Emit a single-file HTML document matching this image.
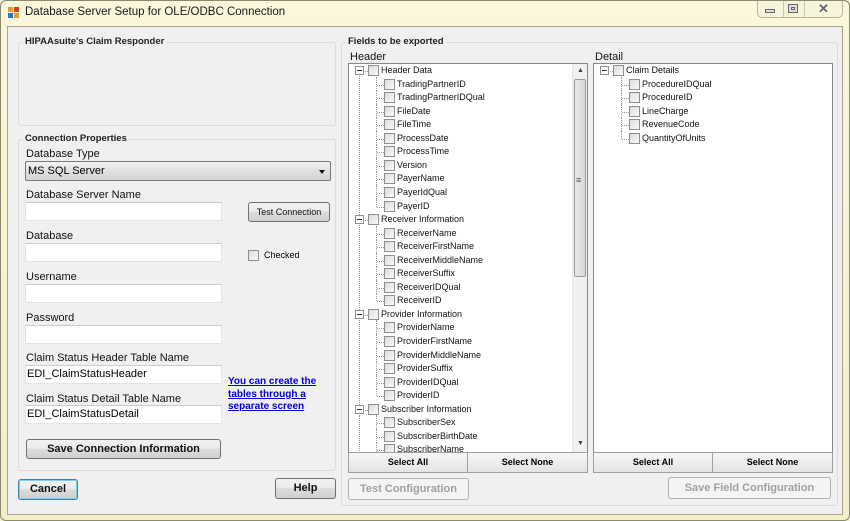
<!DOCTYPE html>
<html><head><meta charset="utf-8"><style>
*{box-sizing:border-box;margin:0;padding:0}
body{width:850px;height:521px;overflow:hidden;background:#f3efd0;font-family:"Liberation Sans",sans-serif;position:relative}
.a{position:absolute}
.frame{left:0;top:0;width:850px;height:521px;background:linear-gradient(#faf7dc,#f2eec8);border:1px solid #8b8a6e;border-radius:6px}
.client{left:7px;top:26px;width:836px;height:489px;background:#f0f0f0;border:1px solid #a9a58a}
.title{left:25px;top:6px;font-size:11.5px;color:#1a1a1a}
.grp{border:1px solid #d8dde3;border-radius:3px}
.gl{font-size:9.5px;font-weight:bold;color:#222;background:#f0f0f0;padding:0 2px}
.lbl{font-size:11px;color:#111}
.tb{background:#fff;border:1px solid #e2e3ea;border-top-color:#c9ccd4;font-size:11px;padding:2px 1px;height:19px}
.btn{border:1px solid #707070;border-radius:3px;background:linear-gradient(#f2f2f2 0%,#ebebeb 45%,#dddddd 50%,#cfcfcf 100%);font-size:11px;text-align:center;color:#111}
.dis{border-color:#adb2b5;background:#f4f4f4;color:#a0a0a0}
.list{background:#fff;border:1px solid #828790;overflow:hidden}
.row{position:absolute;height:13px;font-size:9px;line-height:13px;color:#111;white-space:nowrap}
.cb{position:absolute;width:11px;height:11px;border:1px solid #8f8f8f;background:linear-gradient(135deg,#dcdcdc,#fafafa);top:1px}
.ex{position:absolute;width:9px;height:9px;border:1px solid #919191;background:#fff;top:2px}
.ex:after{content:"";position:absolute;left:1px;top:3px;width:5px;height:1px;background:#333}
.vd{position:absolute;border-left:1px dotted #999;width:0}
.hd{position:absolute;border-top:1px dotted #999;height:0}
.sb{font-size:9px;font-weight:bold;text-align:center;line-height:19px;border:1px solid #a0a0a0;background:linear-gradient(#f6f6f6,#e4e4e4)}
</style></head><body>
<div class="a frame"></div>
<div class="a" style="left:8px;top:7px;width:12px;height:11px">
<div class="a" style="left:0;top:0;width:5px;height:5px;background:#e0a030"></div>
<div class="a" style="left:6px;top:0;width:5px;height:5px;background:#d04020"></div>
<div class="a" style="left:0;top:6px;width:5px;height:5px;background:#3070c0"></div>
<div class="a" style="left:6px;top:6px;width:5px;height:5px;background:#e0a030"></div></div>
<div class="a title">Database Server Setup for OLE/ODBC Connection</div>
<div class="a" style="left:757px;top:1px;width:86px;height:17px;border:1px solid #b8b59a;border-top:none;border-radius:0 0 5px 5px;background:#f7f4dc"></div>
<div class="a" style="left:783px;top:1px;width:1px;height:16px;background:#c8c5aa"></div>
<div class="a" style="left:804px;top:1px;width:1px;height:16px;background:#c8c5aa"></div>
<div class="a" style="left:765px;top:9px;width:10px;height:4px;border:1px solid #666;background:#ddd"></div>
<div class="a" style="left:788px;top:4px;width:10px;height:9px;border:1px solid #666;background:#ddd"><div class="a" style="left:2px;top:2px;width:4px;height:3px;border:1px solid #666"></div></div>
<div class="a" style="left:818px;top:1px;font-size:13px;color:#666;font-weight:bold">✕</div>
<div class="a client"></div>

<!-- left groups -->
<div class="a grp" style="left:18px;top:42px;width:318px;height:84px"></div>
<div class="a gl" style="left:23px;top:36px">HIPAAsuite's Claim Responder</div>
<div class="a grp" style="left:18px;top:139px;width:318px;height:332px"></div>
<div class="a gl" style="left:23px;top:133px">Connection Properties</div>

<div class="a lbl" style="left:26px;top:148px">Database Type</div>
<div class="a" style="left:25px;top:161px;width:306px;height:20px;border:1px solid #7a7a7a;border-radius:2px;background:linear-gradient(#f3f3f3,#e0e0e0 50%,#d5d5d5);font-size:11px;padding:3px 2px">MS SQL Server</div>
<div class="a" style="left:319px;top:170px;width:0;height:0;border-left:3.5px solid transparent;border-right:3.5px solid transparent;border-top:4px solid #111"></div>

<div class="a lbl" style="left:26px;top:189px">Database Server Name</div>
<div class="a tb" style="left:25px;top:202px;width:197px"></div>
<div class="a btn" style="left:248px;top:202px;width:82px;height:20px;font-size:9px;line-height:18px">Test Connection</div>

<div class="a lbl" style="left:26px;top:230px">Database</div>
<div class="a tb" style="left:25px;top:243px;width:197px"></div>
<div class="a" style="left:248px;top:250px;width:11px;height:11px;border:1px solid #8f8f8f;background:linear-gradient(135deg,#dcdcdc,#fafafa)"></div>
<div class="a" style="left:264px;top:250px;font-size:9px">Checked</div>

<div class="a lbl" style="left:26px;top:271px">Username</div>
<div class="a tb" style="left:25px;top:284px;width:197px"></div>
<div class="a lbl" style="left:26px;top:312px">Password</div>
<div class="a tb" style="left:25px;top:325px;width:197px"></div>
<div class="a lbl" style="left:26px;top:352px">Claim Status Header Table Name</div>
<div class="a tb" style="left:25px;top:365px;width:197px">EDI_ClaimStatusHeader</div>
<div class="a lbl" style="left:26px;top:393px">Claim Status Detail Table Name</div>
<div class="a tb" style="left:25px;top:405px;width:197px">EDI_ClaimStatusDetail</div>
<div class="a" style="left:228px;top:376px;font-size:10px;font-weight:bold;color:#0000dd;text-decoration:underline;line-height:12.5px">You can create the<br>tables through a<br>separate screen</div>
<div class="a btn" style="left:26px;top:439px;width:195px;height:20px;font-weight:bold;line-height:18px">Save Connection Information</div>

<div class="a btn" style="left:18px;top:479px;width:60px;height:21px;font-weight:bold;line-height:19px;border-color:#3c7fb1;box-shadow:inset 0 0 0 1px #7ed0f3">Cancel</div>
<div class="a btn" style="left:275px;top:478px;width:61px;height:21px;font-weight:bold;line-height:19px">Help</div>

<!-- right group -->
<div class="a grp" style="left:341px;top:42px;width:497px;height:464px"></div>
<div class="a gl" style="left:346px;top:36px">Fields to be exported</div>
<div class="a lbl" style="left:350px;top:51px">Header</div>
<div class="a lbl" style="left:595px;top:51px">Detail</div>

<div class="a list" style="left:348px;top:63px;width:240px;height:390px">
<div class="a" style="left:223px;top:0;width:16px;height:389px;background:#f0f0f0;border-left:1px solid #e6e6e6"></div>
<div class="a" style="left:225px;top:15px;width:12px;height:198px;border:1px solid #9a9a9a;border-radius:2px;background:linear-gradient(90deg,#e8e8e8,#d9d9d9)"></div>
<div class="a" style="left:228px;top:3px;font-size:7px;color:#444">▲</div>
<div class="a" style="left:228px;top:376px;font-size:7px;color:#444">▼</div>
<div class="a" style="left:227px;top:111px;font-size:9px;color:#555">≡</div>
<div id="ht"></div>
</div>
<div class="a list" style="left:593px;top:63px;width:240px;height:390px"><div id="dt"></div></div>

<div class="a sb" style="left:348px;top:452px;width:120px;height:21px">Select All</div>
<div class="a sb" style="left:467px;top:452px;width:121px;height:21px">Select None</div>
<div class="a sb" style="left:593px;top:452px;width:120px;height:21px">Select All</div>
<div class="a sb" style="left:712px;top:452px;width:121px;height:21px">Select None</div>

<div class="a btn dis" style="left:348px;top:478px;width:121px;height:22px;font-weight:bold;line-height:20px">Test Configuration</div>
<div class="a btn dis" style="left:668px;top:477px;width:163px;height:22px;font-weight:bold;line-height:20px">Save Field Configuration</div>

<script>
function tree(el,items){
 var h='';var pv=null;
 items.forEach(function(it,i){
  var t=i*13.55;
  if(it[0]==0){
   h+='<div class="ex" style="left:6px;top:'+(t+2)+'px"></div><div class="hd" style="left:16px;top:'+(t+7)+'px;width:3px"></div><div class="cb" style="left:19px;top:'+(t+1)+'px"></div><div class="row" style="left:32px;top:'+t+'px">'+it[1]+'</div>';
   if(pv!==null)h+='<div class="vd" style="left:10px;top:'+(pv+12)+'px;height:'+(t-pv-10)+'px"></div>';
   pv=t;
  }else{
   h+='<div class="vd" style="left:27px;top:'+(t-1)+'px;height:'+(it[2]?8:14)+'px"></div><div class="hd" style="left:28px;top:'+(t+7)+'px;width:7px"></div><div class="cb" style="left:35px;top:'+(t+1)+'px"></div><div class="row" style="left:48px;top:'+t+'px">'+it[1]+'</div>';
  }
 });
 if(el=='ht')h+='<div class="vd" style="left:10px;top:'+(pv+12)+'px;height:60px"></div>';
 document.getElementById(el).innerHTML=h;
}
var H=[[0,'Header Data']];
['TradingPartnerID','TradingPartnerIDQual','FileDate','FileTime','ProcessDate','ProcessTime','Version','PayerName','PayerIdQual','PayerID'].forEach(function(s,i,a){H.push([1,s,i==a.length-1])});
H.push([0,'Receiver Information']);
['ReceiverName','ReceiverFirstName','ReceiverMiddleName','ReceiverSuffix','ReceiverIDQual','ReceiverID'].forEach(function(s,i,a){H.push([1,s,i==a.length-1])});
H.push([0,'Provider Information']);
['ProviderName','ProviderFirstName','ProviderMiddleName','ProviderSuffix','ProviderIDQual','ProviderID'].forEach(function(s,i,a){H.push([1,s,i==a.length-1])});
H.push([0,'Subscriber Information']);
['SubscriberSex','SubscriberBirthDate','SubscriberName'].forEach(function(s){H.push([1,s,false])});
tree('ht',H);
var D=[[0,'Claim Details']];
['ProcedureIDQual','ProcedureID','LineCharge','RevenueCode','QuantityOfUnits'].forEach(function(s,i,a){D.push([1,s,i==a.length-1])});
tree('dt',D);
</script>
</body></html>
